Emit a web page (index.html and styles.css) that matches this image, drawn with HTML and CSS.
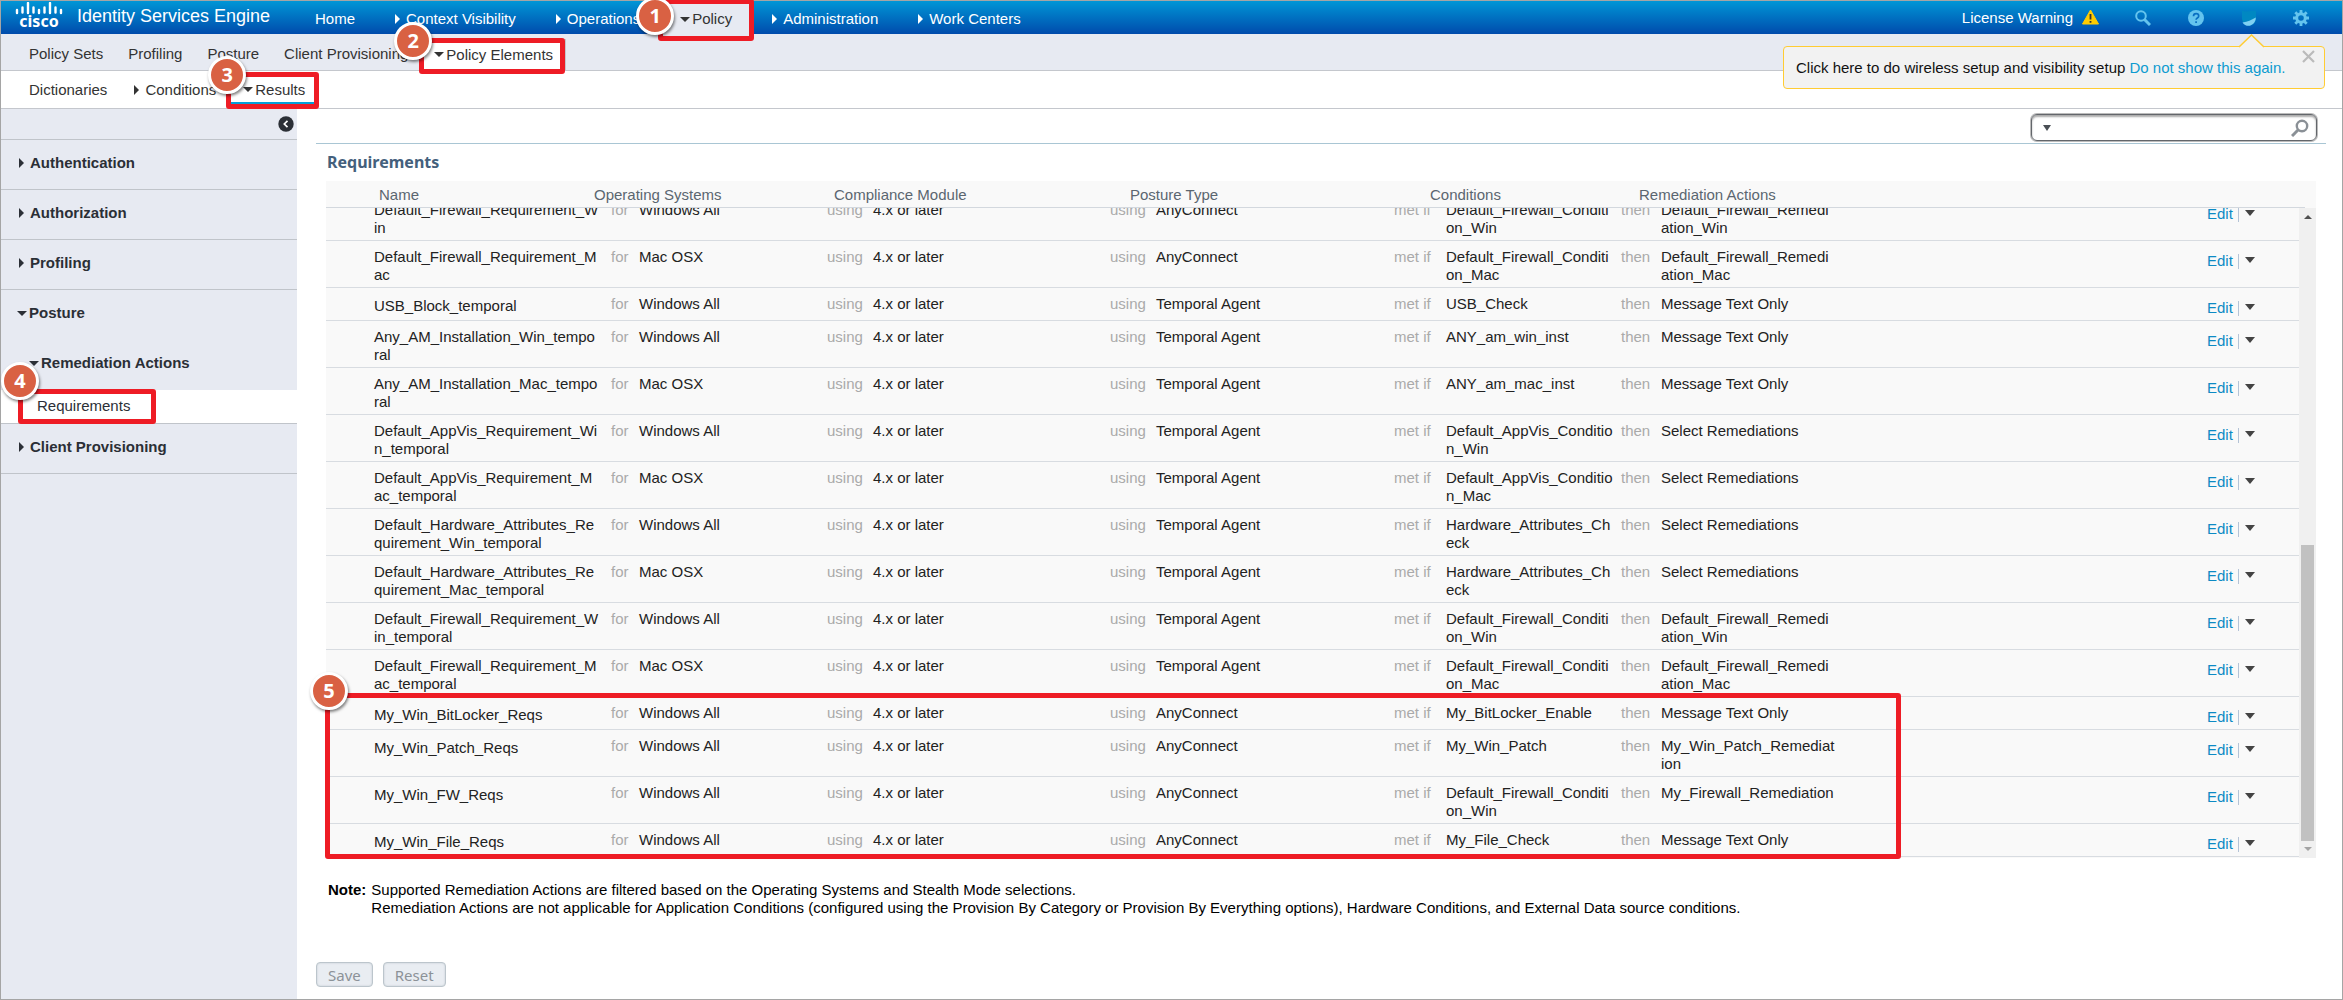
FILE: index.html
```html
<!DOCTYPE html>
<html lang="en">
<head>
<meta charset="utf-8">
<title>Identity Services Engine</title>
<link rel="stylesheet" href="styles.css">
</head>
<body>
<div class="app">
  <header class="topbar">
    <div class="brand">
      <div class="logo">
        <svg class="logo-bars" width="48" height="13" viewBox="0 0 48 13" aria-hidden="true">
          <path d="M2 8v3M7.500 5.500v5M13 1v10M18.500 5.500v5M24 8v3M29.500 5.500v5M35 1v10M40.500 5.500v5M46 8v3" stroke="#fff" stroke-width="2.400" stroke-linecap="round" fill="none"/>
        </svg>
        <span class="logo-word">cisco</span>
      </div>
      <span class="product">Identity Services Engine</span>
    </div>
    <nav class="mainnav">
      <a class="mainnav-item" href="#">Home</a>
      <a class="mainnav-item" href="#"><i class="caret-right"></i>Context Visibility</a>
      <a class="mainnav-item" href="#"><i class="caret-right"></i>Operations</a>
      <a class="mainnav-item mainnav-item--active" href="#"><i class="caret-down"></i>Policy<span class="callout callout--main"><b class="badge">1</b></span></a>
      <a class="mainnav-item" href="#"><i class="caret-right"></i>Administration</a>
      <a class="mainnav-item" href="#"><i class="caret-right"></i>Work Centers</a>
    </nav>
    <div class="tools">
      <a class="license" href="#">License Warning
        <svg width="17" height="16" viewBox="0 0 17 16" aria-hidden="true"><path d="M8.500 1 16.500 15H.5z" fill="#ffcc00" stroke="#ffcc00" stroke-linejoin="round"/><path d="M8.500 5v5.500M8.500 12v1.800" stroke="#333" stroke-width="1.800"/></svg>
      </a>
      <button class="tool" aria-label="Search"><svg width="16" height="18" viewBox="0 0 16 18"><circle cx="6" cy="7" r="4.800" fill="none" stroke="#64c4ee" stroke-width="2"/><path d="M9.500 10.500 15 16" stroke="#64c4ee" stroke-width="3"/></svg></button>
      <button class="tool" aria-label="Help"><svg width="18" height="18" viewBox="0 0 18 18"><circle cx="9" cy="9" r="8" fill="#64c4ee"/><path d="M6.500 7.200c0-3.400 5.200-3.200 5.200-.2 0 2-2.600 2-2.600 3.800M9.100 12.200v1.900" fill="none" stroke="#0a6fc2" stroke-width="1.700"/></svg></button>
      <button class="tool" aria-label="Setup"><svg width="16" height="18" viewBox="0 0 16 18"><path d="M1 1.500C6 4 11 1 15 2v7c0 5-4 8-7 7.500C3 16.500 1 12 1 9z" fill="#0088c2"/><path d="M1.500 13.500C7 13 10 11 14.800 8.500 15 14 10 17 7.500 16.800 5 16.800 3 16 1.500 13.500z" fill="#7fd0f2"/></svg></button>
      <button class="tool" aria-label="Settings"><svg width="16" height="18" viewBox="0 0 16 18"><circle cx="8" cy="9" r="4.300" fill="none" stroke="#64c4ee" stroke-width="3"/><path d="M8 1v3M8 14v3M0 9h3M13 9h3M2.300 3.300l2.200 2.200M11.500 12.500l2.200 2.200M13.700 3.300l-2.200 2.200M4.500 12.500l-2.200 2.200" stroke="#64c4ee" stroke-width="2.800"/></svg></button>
    </div>
  </header>

  <nav class="subnav">
    <a class="subnav-item" href="#">Policy Sets</a>
    <a class="subnav-item" href="#">Profiling</a>
    <a class="subnav-item" href="#">Posture</a>
    <a class="subnav-item" href="#">Client Provisioning</a>
    <a class="subnav-item subnav-item--active" href="#"><i class="caret-down"></i>Policy Elements<span class="callout callout--sub"><b class="badge">2</b></span></a>
  </nav>

  <nav class="subnav subnav--third">
    <a class="subnav-item" href="#">Dictionaries</a>
    <a class="subnav-item" href="#"><i class="caret-right"></i>Conditions</a>
    <a class="subnav-item subnav-item--current" href="#"><i class="caret-down"></i>Results<span class="callout callout--third"><b class="badge">3</b></span></a>
  </nav>

  <div class="notice" role="status">
    <svg class="notice-tip" width="27" height="14" viewBox="0 0 27 14" aria-hidden="true"><path d="M1 13 13.500 1 26 13" fill="#f2f2f2" stroke="#fc3" stroke-width="1.500"/></svg>
    <span>Click here to do wireless setup and visibility setup <a href="#">Do not show this again.</a></span>
    <button class="notice-close" aria-label="Close"><svg width="13" height="13" viewBox="0 0 13 13"><path d="M1 1l11 11M12 1 1 12" stroke="#bbb" stroke-width="2.200"/></svg></button>
  </div>

  <div class="columns">
    <aside class="sidebar">
      <div class="sidebar-top">
        <button class="collapse" aria-label="Collapse"><svg width="16" height="16" viewBox="0 0 16 16"><circle cx="8" cy="8" r="7.700" fill="#2b2f36"/><path d="M9.500 4.800 6.300 8l3.200 3.200" fill="none" stroke="#fff" stroke-width="1.700"/></svg></button>
      </div>
      <a class="side-item" href="#"><i class="caret-right"></i>Authentication</a>
      <a class="side-item" href="#"><i class="caret-right"></i>Authorization</a>
      <a class="side-item" href="#"><i class="caret-right"></i>Profiling</a>
      <a class="side-item side-item--open" href="#"><i class="caret-down"></i>Posture</a>
      <a class="side-item side-item--open side-item--child" href="#"><i class="caret-down"></i>Remediation Actions</a>
      <a class="side-leaf" href="#">Requirements<span class="callout callout--side"><b class="badge">4</b></span></a>
      <a class="side-item" href="#"><i class="caret-right"></i>Client Provisioning</a>
    </aside>

    <main class="content">
      <div class="searchbar">
        <label class="search">
          <i class="caret-down caret-down--small"></i>
          <input type="text" aria-label="Search">
          <svg width="18" height="18" viewBox="0 0 18 18" aria-hidden="true"><circle cx="11" cy="7" r="5.200" fill="none" stroke="#8a9096" stroke-width="2.400"/><path d="M7 11 1 17" stroke="#8a9096" stroke-width="3"/></svg>
        </label>
      </div>
      <h1>Requirements</h1>

      <div class="grid-wrap">
        <table class="grid">
          <thead>
            <tr><th>Name</th><th>Operating Systems</th><th>Compliance Module</th><th>Posture Type</th><th>Conditions</th><th>Remediation Actions</th></tr>
          </thead>
          <tbody>
            <tr><td>Default_Firewall_Requirement_Win</td><td><i>for</i><span>Windows All</span></td><td><i>using</i><span>4.x or later</span></td><td><i>using</i><span>AnyConnect</span></td><td><i>met if</i><span>Default_Firewall_Condition_Win</span></td><td><i>then</i><span>Default_Firewall_Remediation_Win</span></td><td><a href="#">Edit</a><button aria-label="More actions"></button></td></tr>
            <tr><td>Default_Firewall_Requirement_Mac</td><td><i>for</i><span>Mac OSX</span></td><td><i>using</i><span>4.x or later</span></td><td><i>using</i><span>AnyConnect</span></td><td><i>met if</i><span>Default_Firewall_Condition_Mac</span></td><td><i>then</i><span>Default_Firewall_Remediation_Mac</span></td><td><a href="#">Edit</a><button aria-label="More actions"></button></td></tr>
            <tr class="short"><td>USB_Block_temporal</td><td><i>for</i><span>Windows All</span></td><td><i>using</i><span>4.x or later</span></td><td><i>using</i><span>Temporal Agent</span></td><td><i>met if</i><span>USB_Check</span></td><td><i>then</i><span>Message Text Only</span></td><td><a href="#">Edit</a><button aria-label="More actions"></button></td></tr>
            <tr><td>Any_AM_Installation_Win_temporal</td><td><i>for</i><span>Windows All</span></td><td><i>using</i><span>4.x or later</span></td><td><i>using</i><span>Temporal Agent</span></td><td><i>met if</i><span>ANY_am_win_inst</span></td><td><i>then</i><span>Message Text Only</span></td><td><a href="#">Edit</a><button aria-label="More actions"></button></td></tr>
            <tr><td>Any_AM_Installation_Mac_temporal</td><td><i>for</i><span>Mac OSX</span></td><td><i>using</i><span>4.x or later</span></td><td><i>using</i><span>Temporal Agent</span></td><td><i>met if</i><span>ANY_am_mac_inst</span></td><td><i>then</i><span>Message Text Only</span></td><td><a href="#">Edit</a><button aria-label="More actions"></button></td></tr>
            <tr><td>Default_AppVis_Requirement_Win_temporal</td><td><i>for</i><span>Windows All</span></td><td><i>using</i><span>4.x or later</span></td><td><i>using</i><span>Temporal Agent</span></td><td><i>met if</i><span>Default_AppVis_Condition_Win</span></td><td><i>then</i><span>Select Remediations</span></td><td><a href="#">Edit</a><button aria-label="More actions"></button></td></tr>
            <tr><td>Default_AppVis_Requirement_Mac_temporal</td><td><i>for</i><span>Mac OSX</span></td><td><i>using</i><span>4.x or later</span></td><td><i>using</i><span>Temporal Agent</span></td><td><i>met if</i><span>Default_AppVis_Condition_Mac</span></td><td><i>then</i><span>Select Remediations</span></td><td><a href="#">Edit</a><button aria-label="More actions"></button></td></tr>
            <tr><td>Default_Hardware_Attributes_Requirement_Win_temporal</td><td><i>for</i><span>Windows All</span></td><td><i>using</i><span>4.x or later</span></td><td><i>using</i><span>Temporal Agent</span></td><td><i>met if</i><span>Hardware_Attributes_Check</span></td><td><i>then</i><span>Select Remediations</span></td><td><a href="#">Edit</a><button aria-label="More actions"></button></td></tr>
            <tr><td>Default_Hardware_Attributes_Requirement_Mac_temporal</td><td><i>for</i><span>Mac OSX</span></td><td><i>using</i><span>4.x or later</span></td><td><i>using</i><span>Temporal Agent</span></td><td><i>met if</i><span>Hardware_Attributes_Check</span></td><td><i>then</i><span>Select Remediations</span></td><td><a href="#">Edit</a><button aria-label="More actions"></button></td></tr>
            <tr><td>Default_Firewall_Requirement_Win_temporal</td><td><i>for</i><span>Windows All</span></td><td><i>using</i><span>4.x or later</span></td><td><i>using</i><span>Temporal Agent</span></td><td><i>met if</i><span>Default_Firewall_Condition_Win</span></td><td><i>then</i><span>Default_Firewall_Remediation_Win</span></td><td><a href="#">Edit</a><button aria-label="More actions"></button></td></tr>
            <tr><td>Default_Firewall_Requirement_Mac_temporal</td><td><i>for</i><span>Mac OSX</span></td><td><i>using</i><span>4.x or later</span></td><td><i>using</i><span>Temporal Agent</span></td><td><i>met if</i><span>Default_Firewall_Condition_Mac</span></td><td><i>then</i><span>Default_Firewall_Remediation_Mac</span></td><td><a href="#">Edit</a><button aria-label="More actions"></button></td></tr>
            <tr class="short"><td>My_Win_BitLocker_Reqs</td><td><i>for</i><span>Windows All</span></td><td><i>using</i><span>4.x or later</span></td><td><i>using</i><span>AnyConnect</span></td><td><i>met if</i><span>My_BitLocker_Enable</span></td><td><i>then</i><span>Message Text Only</span></td><td><a href="#">Edit</a><button aria-label="More actions"></button></td></tr>
            <tr class="short"><td>My_Win_Patch_Reqs</td><td><i>for</i><span>Windows All</span></td><td><i>using</i><span>4.x or later</span></td><td><i>using</i><span>AnyConnect</span></td><td><i>met if</i><span>My_Win_Patch</span></td><td><i>then</i><span>My_Win_Patch_Remediation</span></td><td><a href="#">Edit</a><button aria-label="More actions"></button></td></tr>
            <tr class="short"><td>My_Win_FW_Reqs</td><td><i>for</i><span>Windows All</span></td><td><i>using</i><span>4.x or later</span></td><td><i>using</i><span>AnyConnect</span></td><td><i>met if</i><span>Default_Firewall_Condition_Win</span></td><td><i>then</i><span>My_Firewall_Remediation</span></td><td><a href="#">Edit</a><button aria-label="More actions"></button></td></tr>
            <tr class="short"><td>My_Win_File_Reqs</td><td><i>for</i><span>Windows All</span></td><td><i>using</i><span>4.x or later</span></td><td><i>using</i><span>AnyConnect</span></td><td><i>met if</i><span>My_File_Check</span></td><td><i>then</i><span>Message Text Only</span></td><td><a href="#">Edit</a><button aria-label="More actions"></button></td></tr>
          </tbody>
        </table>
        <div class="scrollbar" aria-hidden="true">
          <i class="scroll-arrow scroll-arrow--up"></i>
          <div class="scroll-track"><div class="scroll-thumb"></div></div>
          <i class="scroll-arrow scroll-arrow--down"></i>
        </div>
        <span class="callout callout--grid"><b class="badge">5</b></span>
      </div>

      <div class="note">
        <b>Note:</b>
        <p>Supported Remediation Actions are filtered based on the Operating Systems and Stealth Mode selections.<br>Remediation Actions are not applicable for Application Conditions (configured using the Provision By Category or Provision By Everything options), Hardware Conditions, and External Data source conditions.</p>
      </div>
      <div class="actions">
        <button class="btn" disabled>Save</button>
        <button class="btn" disabled>Reset</button>
      </div>
    </main>
  </div>
</div>
</body>
</html>
```
FILE: styles.css
```css
* { box-sizing: border-box; }

body {
  margin: 0;
  font: 15px/18px "Liberation Sans", Arial, sans-serif;
  color: #222;
  background: #fff;
}

a { color: inherit; text-decoration: none; }
button { font: inherit; border: 0; background: none; padding: 0; }
i { font-style: normal; }
svg { display: block; }

.app {
  position: relative;
  display: flex;
  flex-direction: column;
  min-height: 100vh;
  border: 1px solid #a5a5a5;
}

/* Carets */
.caret-right {
  flex: none;
  border: 5px solid transparent;
  border-left-color: currentColor;
  border-right-width: 0;
  margin-right: 6px;
}
.caret-down {
  flex: none;
  border: 5px solid transparent;
  border-top-color: currentColor;
  border-bottom-width: 0;
  margin-right: 2px;
}
.caret-down--small { border-width: 6px 4px 0; margin: 0; }

/* Top bar */
.topbar {
  display: flex;
  height: 33px;
  color: #fff;
  background: linear-gradient(#0096d6, #004bac);
}
.brand {
  display: flex;
  width: 294px;
  padding-left: 14px;
  gap: 14px;
}
.logo { display: flex; flex-direction: column; align-items: center; gap: 1px; }
.logo-bars { margin-top: 1px; }
.logo-word { font: bold 16px/10px "Noto Sans", sans-serif; }
.product { font-size: 18px; line-height: 30px; white-space: nowrap; }
.mainnav { display: flex; }
.mainnav-item {
  position: relative;
  display: flex;
  align-items: center;
  padding: 3px 20px 0;
  white-space: nowrap;
}
.mainnav-item--active { color: #333; background: #e7eaf2; }
.tools {
  display: flex;
  align-items: center;
  gap: 36px;
  margin-left: auto;
  padding-right: 33px;
}
.license { display: flex; gap: 9px; white-space: nowrap; }

/* Second and third level navigation */
.subnav {
  display: flex;
  gap: 1px;
  height: 37px;
  padding: 5px 16px 0;
  background: #e7eaf2;
  border-bottom: 1px solid #c4c7cd;
  color: #333;
}
.subnav--third { gap: 3px; height: 38px; padding-top: 0; background: #fff; }
.subnav-item {
  position: relative;
  display: flex;
  align-items: center;
  padding: 0 12px;
  white-space: nowrap;
}
.subnav:not(.subnav--third) .subnav-item { padding-bottom: 2px; }
.subnav .subnav-item--active {
  background: #fff;
  border: solid #c4c7cd;
  border-width: 1px 1px 0;
  margin-bottom: -1px;
}
.subnav-item--current { border-bottom: 4px solid #fff; box-shadow: inset 0 -2px #049fd9; padding-top: 4px; }

/* Numbered walkthrough callouts */
.callout {
  position: absolute;
  border: 5px solid #ee1c25;
  border-radius: 3px;
  pointer-events: none;
  z-index: 2;
}
.callout--main { inset: -2px -2px -7px -2px; }
.callout--sub { inset: -2px 0 -3px -3px; }
.callout--third { inset: 1px -2px -5px -5px; }
.callout--side { left: 17px; width: 138px; top: -1px; bottom: -1px; }
.callout--grid { left: -1px; right: 20.850%; bottom: -1px; height: 166px; }
.badge {
  position: absolute;
  left: 0;
  top: 0;
  width: 38px;
  height: 38px;
  border: 3px solid #fff;
  border-radius: 50%;
  background: #d96143;
  color: #fff;
  font: bold 20px/31px "Noto Sans", sans-serif;
  text-align: center;
  box-shadow: 1px 2px 3px rgba(0, 0, 0, .5);
}
.callout--main .badge { left: -27px; top: -7px; }
.callout--sub .badge { left: -30px; top: -21px; }
.callout--third .badge { left: -23px; top: -21px; }
.callout--side .badge { left: -22px; top: -32px; }
.callout--grid .badge { left: -20px; top: -26px; }

/* Setup notice */
.notice {
  position: absolute;
  top: 45px;
  right: 17px;
  width: 542px;
  height: 43px;
  padding: 12px;
  border: 1px solid #fc3;
  border-radius: 4px;
  background: #f2f2f2;
  color: #111;
  white-space: nowrap;
  z-index: 3;
}
.notice a { color: #0d9bd0; }
.notice-tip { position: absolute; right: 59px; top: -13px; }
.notice-close { position: absolute; right: 9px; top: 3px; }

/* Page columns */
.columns { display: flex; flex: 1; }
.sidebar { flex: none; width: 296px; background: #e7eaf2; color: #2b2f36; }
.sidebar-top {
  display: flex;
  justify-content: flex-end;
  align-items: center;
  height: 31px;
  padding-right: 3px;
  border-bottom: 1px solid #c0c4ca;
}
.side-item {
  display: flex;
  align-items: center;
  height: 50px;
  padding: 0 0 3px 18px;
  border-bottom: 1px solid #c0c4ca;
  font-weight: bold;
}
.side-item--open { border-bottom-color: transparent; padding-left: 16px; }
.side-item--child { padding-left: 28px; }
.side-leaf {
  position: relative;
  display: block;
  padding: 7px 36px 8px;
  border-bottom: 1px solid #c0c4ca;
  background: #fff;
}

.content { flex: 1; min-width: 0; padding: 0 16px 10px 19px; }
.searchbar {
  display: flex;
  justify-content: flex-end;
  padding: 5px 9px 2px;
  border-bottom: 1px solid #a9c6d4;
}
.search {
  display: flex;
  align-items: center;
  width: 286px;
  height: 27px;
  padding: 0 7px 0 11px;
  border: 1px solid #63666b;
  border-radius: 6px;
  box-shadow: inset 0 2px 2px #aaa, 0 0 0 1px #bbb;
  color: #4a4f55;
}
.search input { flex: 1; min-width: 0; border: 0; outline: 0; background: none; font: inherit; }
h1 {
  margin: 0;
  padding: 8px 11px 9px;
  color: #44607c;
  font: bold 16px/20px "Noto Sans", sans-serif;
}

/* Requirements grid */
.grid-wrap { position: relative; margin: 0 10px; background: #f9f9f9; }
.grid, .grid thead { display: block; }
.grid tr { display: grid; }
.grid thead { margin-right: 11px; border-bottom: 1px solid #d3d8de; }
.grid thead tr {
  grid-template-columns: 268px 240fr 296fr 300fr 209fr 666fr;
  height: 26px;
}
.grid th { padding: 5px 0 0; color: #5b6670; font-weight: normal; text-align: left; }
.grid th:first-child { padding-left: 53px; }
.grid tbody {
  display: flex;
  flex-direction: column;
  justify-content: flex-end;
  height: 650px;
  margin-right: 17px;
  padding-bottom: 1px;
  overflow: hidden;
}
.grid tbody tr {
  flex: none;
  grid-template-columns: 285px 216fr 283fr 284fr 227fr 586fr 92px;
  min-height: 33px;
  border-bottom: 1px solid #d8dce1;
}
.grid td { display: flex; padding: 7px 0 3px; word-break: break-all; }
.grid td:first-child { padding-left: 48px; padding-right: 12px; }
.grid .short td:first-child { padding-top: 9px; }
.grid td i { flex: none; width: 46px; color: #aaa; }
.grid td:nth-child(2) i { width: 28px; }
.grid td:nth-child(5) i { width: 52px; }
.grid td:nth-child(6) i { width: 40px; }
.grid td:nth-child(5) span { width: 168px; }
.grid td:nth-child(6) span { width: 175px; }
.grid td:last-child { padding: 11px 0 0; }
.grid td a { color: #0d8ac4; }
.grid td button {
  display: flex;
  height: 15px;
  margin: 2px 0 0 5px;
  border-left: 1px solid #b4c3d6;
}
.grid td button::after {
  content: "";
  margin: 3px 0 0 6px;
  border: 5px solid transparent;
  border-top: 6px solid #444;
  border-bottom: 0;
}

.scrollbar {
  position: absolute;
  top: 27px;
  right: 0;
  bottom: 0;
  display: flex;
  flex-direction: column;
  align-items: center;
  width: 17px;
  padding: 7px 0;
  background: #f0f0f0;
}
.scroll-arrow { border: 4px solid transparent; }
.scroll-arrow--up { border-bottom-color: #505050; border-top: 0; }
.scroll-arrow--down { border-top-color: #a3a3a3; border-bottom: 0; }
.scroll-track {
  display: flex;
  flex: 1;
  flex-direction: column;
  justify-content: flex-end;
  width: 13px;
  margin: 6px 0;
}
.scroll-thumb { height: 48%; background: #c1c1c1; }

.note { display: flex; gap: 5px; padding: 23px 12px 0; color: #000; }
.note p { margin: 0; }
.actions { display: flex; gap: 10px; padding-top: 45px; }
.btn {
  height: 25px;
  padding: 0 11px;
  border: 1px solid #bcc5cc;
  border-radius: 4px;
  background: #e9edf2;
  box-shadow: inset 0 0 2px #bcc5cc;
  color: #8c9298;
  font: 15px/20px "Noto Sans", sans-serif;
}
```
